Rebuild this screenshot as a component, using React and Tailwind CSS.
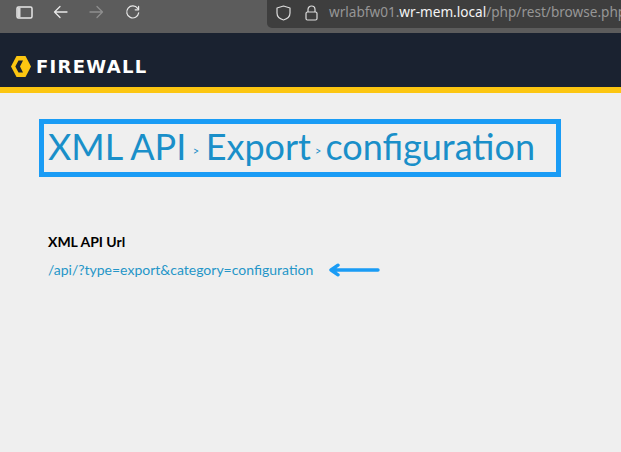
import React from "react";

function BrowserBar() {
  return (
    <div className="h-[33px] bg-[#5c5c5c] flex items-start shrink-0">
      <div className="flex items-center w-[267px] h-[24px] pl-4 gap-[20px] shrink-0">
        <svg width="17" height="13" viewBox="0 0 17 13" fill="none">
          <rect x="1" y="1" width="15" height="11" rx="1.500" fill="#5c5c5c" stroke="#e6e6e6" strokeWidth="1.500" />
          <rect x="1.500" y="1.500" width="3" height="10" fill="#d8d8d8" />
        </svg>
        <svg width="15" height="14" viewBox="0 0 15 14" fill="none" stroke="#e8e8e8" strokeWidth="1.300" strokeLinecap="round" strokeLinejoin="round">
          <path d="M14 7H1.500M7 1.500 1.500 7 7 12.500" />
        </svg>
        <svg width="15" height="14" viewBox="0 0 15 14" fill="none" stroke="#8e8e8e" strokeWidth="1.300" strokeLinecap="round" strokeLinejoin="round" className="ml-[1px]">
          <path d="M1 7h12.500M8 1.500 13.500 7 8 12.500" />
        </svg>
        <svg width="15" height="15" viewBox="0 0 16 15" fill="none" stroke="#e8e8e8" strokeWidth="1.300" strokeLinecap="round" strokeLinejoin="round" className="ml-[1px]">
          <path d="M13.500 3.200A6.400 6.400 0 1 0 14.600 8" />
          <path d="M14.500 1v3.600h-3.600" />
        </svg>
      </div>
      <div className="flex-1 h-[28px] bg-[#3e3e3e] rounded-bl-[5px] flex items-center pl-[9px] overflow-hidden">
        <svg width="15" height="16" viewBox="0 0 15 16" fill="none" stroke="#dcdcdc" strokeWidth="1.200" strokeLinejoin="round" className="shrink-0 -mt-[3px]">
          <path d="M7.500 1 1 3v5c0 3.500 3 6 6.500 7C11 14 14 11.500 14 8V3L7.500 1Z" />
        </svg>
        <svg width="13" height="16" viewBox="0 0 13 16" fill="none" stroke="#dcdcdc" strokeWidth="1.200" className="shrink-0 ml-[14px] -mt-[3px]">
          <path d="M3 7V4.500a3.500 3.500 0 0 1 7 0V7" />
          <rect x="1" y="7" width="11" height="8" rx="1.500" />
        </svg>
        <span className="ml-[11px] whitespace-nowrap text-[13.600px] text-[#969696] -mt-[3px] font-['Noto_Sans',sans-serif]">
          wrlabfw01.<span className="text-[#f4f4f4]">wr-mem.local</span>/php/rest/browse.php
        </span>
      </div>
    </div>
  );
}

export default function App() {
  return (
    <div className="w-[621px] h-[452px] bg-[#efefef] flex flex-col overflow-hidden font-['Lato',sans-serif]">
      <BrowserBar />
      <header className="h-[54px] bg-[#1a2230] flex items-center pl-[11px] shrink-0 pt-[13px]">
        <svg width="20" height="21" viewBox="0 0 20 21" className="shrink-0">
          <path fill="#fcc611" d="M5.500 0H14.500L20 10.500 14.500 21H5.500L0 10.500Z" />
          <path fill="#1a2230" d="M7.500 4.500H12L9 10.500 12 16.500H7.500L4.300 10.500Z" />
        </svg>
        <span className="ml-[5px] text-[18px] leading-none font-bold tracking-[1.300px] text-white font-['DejaVu_Sans',sans-serif]">FIREWALL</span>
      </header>
      <div className="h-[6px] bg-[#fcc611] shrink-0" />
      <main className="flex-1 pl-[39px] pt-[26px]">
        <h1 className="w-[522px] h-[58px] border-[5px] border-[#1a9cf5] pl-[4px] pb-[5px] flex items-center whitespace-nowrap text-[36px] leading-none font-normal text-[#1a8fc9]">
          XML API<span className="text-[11px] mx-[6.500px] mt-[9px]">&gt;</span>Export<span className="text-[11px] mx-[4px] mt-[9px]">&gt;</span>configuration
        </h1>
        <div className="pl-[9px] mt-[56px]">
          <div className="text-[14px] leading-[17px] font-bold text-black">XML API Url</div>
          <div className="flex items-center mt-[11px]">
            <a className="text-[14px] leading-[17px] text-[#2596c8]">/api/?type=export&amp;category=configuration</a>
            <svg width="52" height="14" viewBox="0 0 52 14" fill="none" stroke="#1a9cf5" strokeWidth="3.400" strokeLinecap="round" strokeLinejoin="round" className="ml-[15px]">
              <path d="M50 7H3M10 2.200 3 7l7 4.800" />
            </svg>
          </div>
        </div>
      </main>
    </div>
  );
}
